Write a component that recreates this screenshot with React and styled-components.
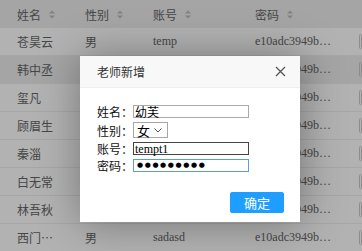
import React from 'react';
import styled, { createGlobalStyle } from 'styled-components';

const GlobalStyle = createGlobalStyle`
  html, body {
    margin: 0;
    padding: 0;
    background: #fff;
    overflow: hidden;
  }
  body {
    font-family: "Noto Sans CJK SC", "Liberation Sans", sans-serif;
    font-size: 12px;
    color: #666;
  }
`;

const Page = styled.div`
  position: relative;
  width: 362px;
  height: 251px;
  overflow: hidden;
`;

const Table = styled.div`
  display: grid;
  grid-template-columns: 68px 68px 102px 104px 1fr;
  grid-auto-rows: 28px;
`;

const HeadCell = styled.div`
  height: 29px;
  display: flex;
  align-items: center;
  padding-left: 17px;
  background: #ececec;
  border-bottom: 1px solid #e2e2e2;
  box-sizing: border-box;
  color: #666;
  white-space: nowrap;
`;

const Cell = styled.div`
  display: flex;
  align-items: center;
  padding-left: 17px;
  background: ${p => (p.$hover ? '#ececec' : '#fff')};
  border-bottom: 1px solid #eee;
  box-sizing: border-box;
  white-space: nowrap;
  overflow: hidden;
  font-family: ${p => (p.$serif ? '"Liberation Serif", serif' : '"Noto Sans CJK SC", sans-serif')};
`;

const SortIcon = styled.svg`
  margin-left: 8px;
  width: 6px;
  height: 9px;
`;

const EdgeButton = styled.div`
  width: 20px;
  height: 15px;
  border: 1px solid #c9c9c9;
  border-radius: 2px;
  box-sizing: border-box;
`;

const Shade = styled.div`
  position: absolute;
  inset: 0;
  background: rgba(0, 0, 0, 0.3);
`;

const Modal = styled.div`
  position: absolute;
  left: 80px;
  top: 56px;
  width: 220px;
  height: 166px;
  background: #fff;
  box-shadow: 1px 1px 40px rgba(0, 0, 0, 0.35);
  display: flex;
  flex-direction: column;
`;

const ModalHead = styled.div`
  height: 31px;
  background: #f8f8f8;
  border-bottom: 1px solid #eee;
  display: flex;
  align-items: center;
  justify-content: space-between;
  padding: 0 14px 0 17px;
  color: #333;
  font-size: 12px;
`;

const ModalBody = styled.div`
  flex: 1;
  padding: 17px 16px 9px 17px;
  display: flex;
  flex-direction: column;
`;

const Form = styled.div`
  display: flex;
  flex-direction: column;
  gap: 4px;
  flex: 1;
`;

const FieldRow = styled.div`
  display: flex;
  align-items: center;
  height: ${p => (p.$tall ? '16px' : '13px')};
`;

const Label = styled.span`
  width: 36px;
  color: #111;
  font-size: 12px;
  white-space: nowrap;
`;

const TextBox = styled.div`
  width: 116px;
  height: 13px;
  box-sizing: border-box;
  border: 1px solid ${p => p.$border};
  display: flex;
  align-items: center;
  padding-left: ${p => (p.$dots ? '3px' : '1px')};
  font-size: ${p => (p.$dots ? '7px' : '12px')};
  color: #000;
  font-family: ${p => (p.$serif ? '"Liberation Serif", serif' : p.$dots ? '"DejaVu Sans", sans-serif' : '"Noto Sans CJK SC", sans-serif')};
  letter-spacing: ${p => (p.$dots ? '1.6px' : '0')};
  line-height: 1;
`;

const SelectBox = styled.div`
  width: 35px;
  height: 16px;
  box-sizing: border-box;
  border: 1px solid #a6a6a6;
  display: flex;
  align-items: center;
  justify-content: space-between;
  padding: 0 5px 0 3px;
  color: #000;
  font-size: 13px;
`;

const Actions = styled.div`
  display: flex;
  justify-content: flex-end;
`;

const PrimaryButton = styled.button`
  width: 54px;
  height: 21px;
  border: 1px solid #1e9fff;
  background: #1e9fff;
  color: #fff;
  font-family: "Noto Sans CJK SC", sans-serif;
  font-size: 13px;
  padding: 0;
  border-radius: 2px;
`;

const Sort = () => (
  <SortIcon viewBox="0 0 6 9">
    <path d="M0 3.5 L3 0.5 L6 3.5 Z" fill="#bbb" />
    <path d="M0 5.5 L3 8.5 L6 5.5 Z" fill="#bbb" />
  </SortIcon>
);

const rows = [
  ['苍昊云', '男', 'temp'],
  ['韩中丞', '', ''],
  ['玺凡', '', ''],
  ['顾眉生', '', ''],
  ['秦淄', '', ''],
  ['白无常', '', ''],
  ['林吾秋', '', ''],
  ['西门…', '男', 'sadasd'],
];

export default function App() {
  return (
    <Page>
      <GlobalStyle />
      <Table>
        {['姓名', '性别', '账号', '密码'].map(h => (
          <HeadCell key={h}>
            {h}
            <Sort />
          </HeadCell>
        ))}
        <HeadCell />
        {rows.map(([name, sex, acc], i) => (
          <React.Fragment key={name}>
            <Cell $hover={i === 1}>{name}</Cell>
            <Cell $hover={i === 1}>{sex}</Cell>
            <Cell $hover={i === 1} $serif>{acc}</Cell>
            <Cell $hover={i === 1} $serif>e10adc3949b…</Cell>
            <Cell $hover={i === 1}>
              <EdgeButton />
            </Cell>
          </React.Fragment>
        ))}
      </Table>
      <Shade />
      <Modal>
        <ModalHead>
          老师新增
          <svg width="11" height="11" viewBox="0 0 11 11">
            <path d="M1 1 L10 10 M10 1 L1 10" stroke="#555" strokeWidth="1.3" />
          </svg>
        </ModalHead>
        <ModalBody>
          <Form>
            <FieldRow>
              <Label>姓名：</Label>
              <TextBox $border="#a9a9a9">幼芙</TextBox>
            </FieldRow>
            <FieldRow $tall>
              <Label>性别：</Label>
              <SelectBox>
                女
                <svg width="8" height="5" viewBox="0 0 8 5">
                  <path d="M0.5 0.5 L4 4 L7.5 0.5" stroke="#555" fill="none" strokeWidth="1" />
                </svg>
              </SelectBox>
            </FieldRow>
            <FieldRow>
              <Label>账号：</Label>
              <TextBox $border="#444" $serif>tempt1</TextBox>
            </FieldRow>
            <FieldRow>
              <Label>密码：</Label>
              <TextBox $border="#5b9dd9" $dots>●●●●●●●●●</TextBox>
            </FieldRow>
          </Form>
          <Actions>
            <PrimaryButton>确定</PrimaryButton>
          </Actions>
        </ModalBody>
      </Modal>
    </Page>
  );
}
